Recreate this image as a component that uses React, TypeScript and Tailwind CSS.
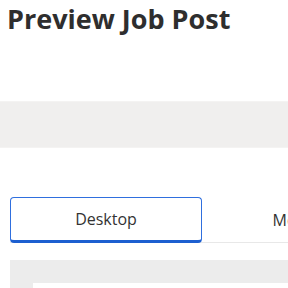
export default function App() {
  return (
    <div className="w-[288px] h-[288px] overflow-hidden bg-white font-['Open_Sans',sans-serif] text-[#2e2e2e]">
      {/* Header */}
      <h1 className="px-[7px] text-[27px] leading-[38px] font-bold whitespace-nowrap">Preview Job Post</h1>

      {/* Banner strip */}
      <div className="mt-[63px] h-[47px] bg-[#f0efee] border-y border-[#f4f3f2]" />

      {/* Tabs */}
      <div className="mt-[49px] ml-[10px] flex w-[600px] border-b border-[#e8e8e8]">
        <button className="w-[192px] h-[46px] -mb-px shrink-0 rounded-[4px] border border-[#2f6fde] border-b-[3px] border-b-[#1d5fd0] bg-white text-[16px] text-[#333]">
          Desktop
        </button>
        <button className="w-[192px] h-[45px] shrink-0 bg-white text-[16px] text-[#333]">
          Mobile
        </button>
      </div>

      {/* Preview frame */}
      <div className="mt-[17px] ml-[10px] h-[200px] bg-[#ececec] pl-[23px] pt-[23px]">
        <div className="h-full bg-white" />
      </div>
    </div>
  );
}
